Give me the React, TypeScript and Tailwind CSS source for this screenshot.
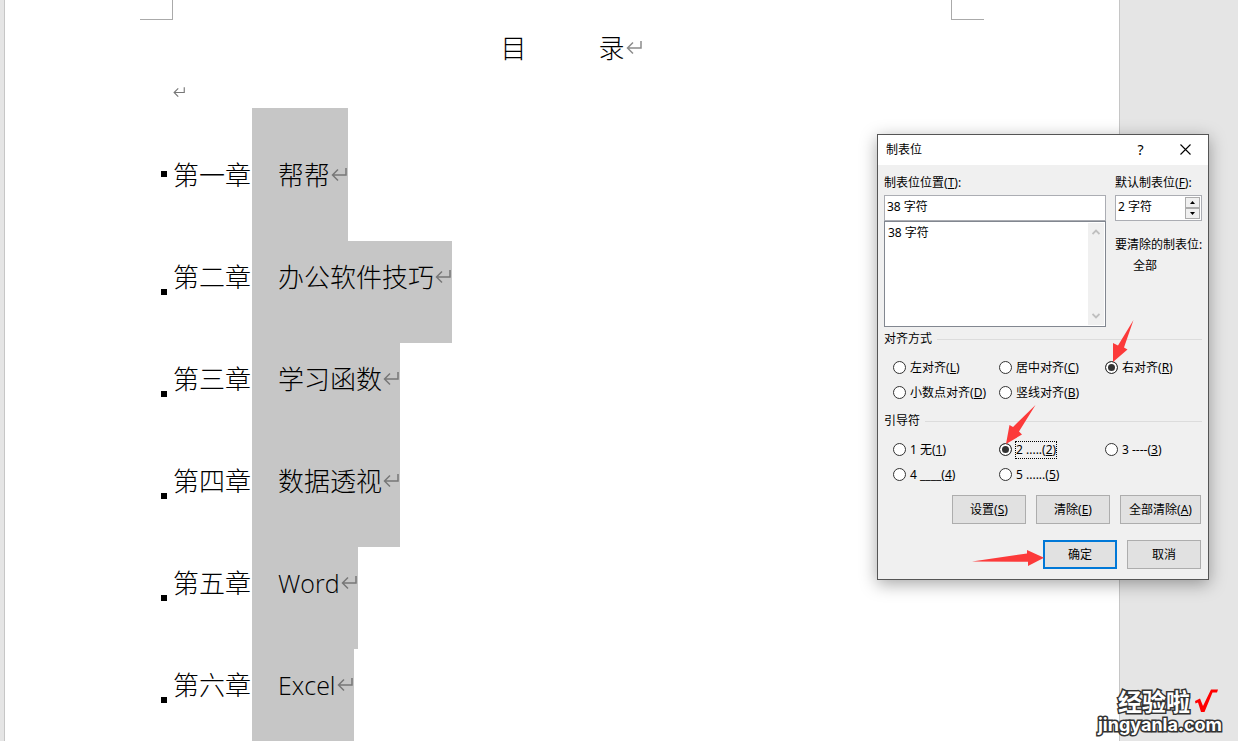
import { useState } from "react";

const chapters = [
    { label: "第一章", title: "帮帮" },
    { label: "第二章", title: "办公软件技巧" },
    { label: "第三章", title: "学习函数" },
    { label: "第四章", title: "数据透视" },
    { label: "第五章", title: "Word", latin: true },
    { label: "第六章", title: "Excel", latin: true },
];

const alignments = [
    { id: "left", text: "左对齐", hotkey: "L" },
    { id: "center", text: "居中对齐", hotkey: "C" },
    { id: "right", text: "右对齐", hotkey: "R" },
    { id: "decimal", text: "小数点对齐", hotkey: "D" },
    { id: "bar", text: "竖线对齐", hotkey: "B" },
];

const leaders = [
    { id: "1", text: "1 无", hotkey: "1" },
    { id: "2", text: "2 .....", hotkey: "2" },
    { id: "3", text: "3 ----", hotkey: "3" },
    { id: "4", text: "4 ____", hotkey: "4" },
    { id: "5", text: "5 ......", hotkey: "5" },
];

type Option = { id: string; text: string; hotkey: string };

function ReturnMark({ className }: { className: string }) {
    return (
        <svg viewBox="0 0 16 14" className={className} fill="none" stroke="currentColor" strokeWidth="1.5">
            <path d="M15 0v7H1.5M7 1.5L1.5 7L7 12.5" />
        </svg>
    );
}

function Hotkey({ letter }: { letter: string }) {
    return (
        <>
            (<span className="underline underline-offset-1">{letter}</span>)
        </>
    );
}

function RadioGroup({ legend, name, options, value, onChange, focused }: {
    legend: string;
    name: string;
    options: Option[];
    value: string;
    onChange: (id: string) => void;
    focused?: boolean;
}) {
    return (
        <div role="radiogroup" aria-label={legend}>
            <div className="flex h-5 items-center gap-[5px]">
                <span>{legend}</span>
                <span className="h-px flex-1 bg-[#dcdcdc]" />
            </div>
            <div className="mt-1.5 grid grid-cols-[106px_106px_1fr] pl-[9px]">
                {options.map((option) => (
                    <label key={option.id} className="flex h-[25px] items-center gap-[3px] whitespace-nowrap">
                        <input
                            type="radio"
                            name={name}
                            checked={value === option.id}
                            onChange={() => onChange(option.id)}
                            className="h-[13px] w-[13px] shrink-0 appearance-none rounded-full border border-[#333] bg-white checked:bg-[#333] checked:shadow-[inset_0_0_0_2px_white]"
                        />
                        <span className={focused && value === option.id ? "border border-dotted border-black" : "border border-transparent"}>
                            {option.text}
                            <Hotkey letter={option.hotkey} />
                        </span>
                    </label>
                ))}
            </div>
        </div>
    );
}

function TabStopDialog() {
    const [alignment, setAlignment] = useState("right");
    const [leader, setLeader] = useState("2");
    const button = "h-[29px] border border-[#adadad] bg-[#e1e1e1]";

    return (
        <div
            role="dialog"
            aria-label="制表位"
            className="absolute right-[29px] top-[134px] w-[332px] border border-[#555] bg-[#f0f0f0] font-['Noto_Sans','Noto_Sans_CJK_SC',sans-serif] text-xs text-black shadow-[0_4px_16px_rgba(0,0,0,0.35)]"
        >
            <div className="flex h-[30px] items-center bg-white pl-2">
                <h2 className="flex-1">制表位</h2>
                <button aria-label="帮助" className="h-full w-[45px] text-sm">?</button>
                <button aria-label="关闭" className="flex h-full w-[45px] items-center justify-center">
                    <svg viewBox="0 0 12 12" className="h-3 w-3" stroke="black" strokeWidth="1.1">
                        <path d="M0.5 0.5l10 10M10.5 0.5l-10 10" />
                    </svg>
                </button>
            </div>

            <div className="px-1.5 pb-2.5 pt-2">
                <div className="flex gap-[9px]">
                    <div className="flex-1">
                        <label htmlFor="position" className="block leading-5">
                            制表位位置<Hotkey letter="T" />:
                        </label>
                        <input
                            id="position"
                            defaultValue="38 字符"
                            className="mt-0.5 block h-[26px] w-full border border-[#abadb3] bg-white px-0.5 pb-1 outline-none"
                        />
                        <div className="flex h-[106px] border border-[#828790] bg-white p-px">
                            <select
                                size={5}
                                aria-label="制表位列表"
                                className="min-w-0 flex-1 appearance-none overflow-hidden bg-white outline-none"
                            >
                                <option className="px-0.5 py-0">38 字符</option>
                            </select>
                            <div className="flex w-4 flex-col items-center justify-between bg-[#f0f0f0] py-1.5">
                                <svg viewBox="0 0 8 6" className="h-1.5 w-2" fill="none" stroke="#bfbfbf" strokeWidth="1.8">
                                    <path d="M0.5 5L4 1.5L7.5 5" />
                                </svg>
                                <svg viewBox="0 0 8 6" className="h-1.5 w-2" fill="none" stroke="#bfbfbf" strokeWidth="1.8">
                                    <path d="M0.5 1L4 4.5L7.5 1" />
                                </svg>
                            </div>
                        </div>
                    </div>

                    <div className="w-[87px] whitespace-nowrap">
                        <label htmlFor="default-stop" className="block leading-5">
                            默认制表位<Hotkey letter="F" />:
                        </label>
                        <div className="mt-0.5 flex h-[26px] border border-[#abadb3] bg-white p-px">
                            <input
                                id="default-stop"
                                defaultValue="2 字符"
                                className="min-w-0 flex-1 px-px pb-0.5 outline-none"
                            />
                            <div className="flex w-[15px] flex-col">
                                <button aria-label="增加" className="flex flex-1 items-center justify-center border border-[#acacac] bg-[#f0f0f0]">
                                    <svg viewBox="0 0 5 3" className="h-[3px] w-[5px]"><path d="M0 3L2.5 0L5 3z" /></svg>
                                </button>
                                <button aria-label="减少" className="flex flex-1 items-center justify-center border border-[#acacac] bg-[#f0f0f0]">
                                    <svg viewBox="0 0 5 3" className="h-[3px] w-[5px]"><path d="M0 0L2.5 3L5 0z" /></svg>
                                </button>
                            </div>
                        </div>
                        <p className="mt-[13px] leading-[21px]">要清除的制表位:</p>
                        <p className="pl-[18px] leading-[21px]">全部</p>
                    </div>
                </div>

                <div className="mt-0.5">
                    <RadioGroup legend="对齐方式" name="alignment" options={alignments} value={alignment} onChange={setAlignment} />
                </div>
                <div className="mt-1.5">
                    <RadioGroup legend="引导符" name="leader" options={leaders} value={leader} onChange={setLeader} focused />
                </div>

                <div className="mt-2 flex justify-end gap-2.5 pr-px">
                    <button className={`${button} w-[74px]`}>设置<Hotkey letter="S" /></button>
                    <button className={`${button} w-[74px]`}>清除<Hotkey letter="E" /></button>
                    <button className={`${button} w-[81px]`}>全部清除<Hotkey letter="A" /></button>
                </div>
                <div className="mt-4 flex justify-end gap-2.5 pr-px">
                    <button className="h-[29px] w-[74px] border-2 border-[#0078d7] bg-[#e1e1e1]">确定</button>
                    <button className={`${button} w-[74px]`}>取消</button>
                </div>
            </div>

            {/* red pointers */}
            <svg viewBox="878 135 330 444" className="pointer-events-none absolute inset-0 h-full w-full" fill="#fc3a3a">
                <path d="M1133.5 320L1118 345.5L1113 343L1113 362L1127.5 349.5L1124 347.5z" />
                <path d="M1035.5 405L1013 427L1009.5 425L1006 444L1022 434.5L1019 431.5z" />
                <path d="M972 561.5L1027 553.5L1027 550L1044 557.8L1028 566L1028 561.8z" />
            </svg>
        </div>
    );
}

function Watermark() {
    return (
        <div className="absolute bottom-1.5 right-4 flex flex-col items-end gap-0.5 font-bold text-white [-webkit-text-stroke:3px_#333] [paint-order:stroke_fill]">
            <div className="flex items-center gap-1 pr-1">
                <span className="font-['Noto_Sans_CJK_SC',sans-serif] text-2xl leading-6">经验啦</span>
                <svg viewBox="0 0 24 24" className="h-6 w-6" fill="#f00">
                    <path d="M1 12L6 9.5L9 17L17 0.5L24 0.5L23 3.5L18.5 3.5L10.5 23L7 23L4 13.5L1.5 14.5z" />
                </svg>
            </div>
            <span className="font-[Inter] text-lg leading-5">jingyanla.com</span>
        </div>
    );
}

export default function App() {
    return (
        <div className="relative flex h-screen overflow-hidden bg-[#e5e5e5] pl-1 pr-[118px]">
            <main className="flex-1 border-x border-[#c6c6c6] bg-white font-['Open_Sans','Noto_Sans_CJK_SC',sans-serif] text-[26px] font-light text-black">
                <div className="flex justify-between px-[135px]">
                    <span className="h-5 w-[33px] border-b border-r border-[#aaa]" />
                    <span className="h-5 w-[33px] border-b border-l border-[#aaa]" />
                </div>
                <h1 className="flex h-14 items-center justify-center pl-[166px] pr-[148px]">
                    <span className="mr-[72px]">目</span>
                    <span>录</span>
                    <ReturnMark className="ml-px h-3.5 w-4 text-[#8c8c8c]" />
                </h1>
                <div className="flex h-8 items-center pl-[168px]">
                    <ReturnMark className="h-[11px] w-3 text-[#777]" />
                </div>

                <ul className="pl-[156px]">
                    {chapters.map((chapter, index) => (
                        <li key={chapter.label} className="flex items-stretch">
                            <span className={`mr-1.5 h-1.5 w-1.5 bg-black ${index === 0 ? "mt-[63px]" : "mt-12"}`} />
                            <span className={`pr-px leading-[72px] ${index === 0 ? "pt-[31px]" : ""}`}>{chapter.label}</span>
                            <span className={`flex items-center bg-[#c6c6c6] pb-[30px] pl-[26px] pr-px leading-[72px] ${index === 0 ? "pt-[31px]" : ""}`}>
                                <span className={chapter.latin ? "text-[25px] leading-[72px]" : ""}>{chapter.title}</span>
                                <ReturnMark className="ml-px h-3.5 w-4 text-[#777]" />
                            </span>
                        </li>
                    ))}
                </ul>
            </main>

            <TabStopDialog />
            <Watermark />
        </div>
    );
}
